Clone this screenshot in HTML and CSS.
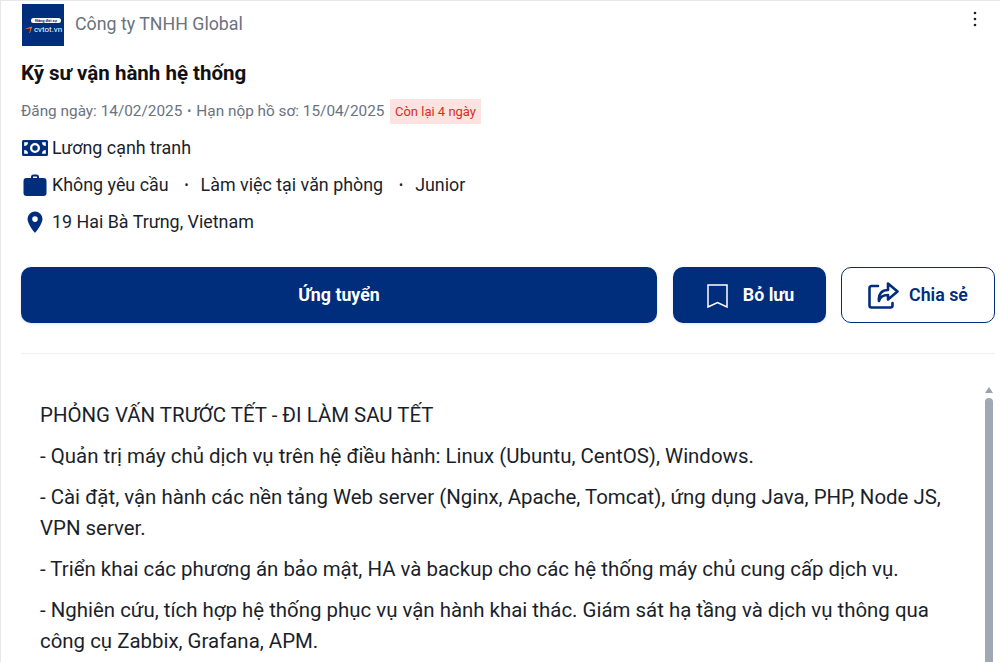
FILE: index.html
```html
<!DOCTYPE html>
<html lang="vi">
<head>
<meta charset="utf-8">
<title>Kỹ sư vận hành hệ thống</title>
<link rel="stylesheet" href="styles.css">
</head>
<body>
<main class="card">
  <header class="company">
    <div class="logo">
      <span class="logo-tag">Nâng đời sự</span>
      <span class="logo-row">
        <svg class="logo-mark" viewBox="0 0 12 10"><path d="M0 4.5 L8 1.5 L11 1 L8 9.5 L7 9.5 L8.5 3.5 Z" fill="#f26a21"/></svg>
        <span class="logo-name">cvtot.vn</span>
      </span>
    </div>
    <span class="company-name">Công ty TNHH Global</span>
    <svg class="more" viewBox="0 0 4 16"><circle cx="2" cy="2" r="1.3"/><circle cx="2" cy="8" r="1.3"/><circle cx="2" cy="14" r="1.3"/></svg>
  </header>
  <h1 class="title">Kỹ sư vận hành hệ thống</h1>
  <div class="dates">
    <span>Đăng ngày: 14/02/2025</span>
    <span class="dot">•</span>
    <span>Hạn nộp hồ sơ: 15/04/2025</span>
    <span class="badge">Còn lại 4 ngày</span>
  </div>
  <div class="info-list">
    <div class="info">
      <svg class="icon" viewBox="0 0 26 16"><path fill="#002d7c" fill-rule="evenodd" d="M1.5 0h23A1.5 1.5 0 0 1 26 1.500v13a1.500 1.500 0 0 1-1.500 1.500h-23A1.500 1.500 0 0 1 0 14.500v-13A1.500 1.500 0 0 1 1.500 0ZM6 2.200H2.200V6A3.800 3.800 0 0 0 6 2.200ZM20 2.200A3.800 3.800 0 0 0 23.800 6V2.200ZM2.200 10v3.800H6A3.800 3.800 0 0 0 2.200 10ZM23.800 10A3.800 3.800 0 0 0 20 13.800h3.800ZM13 3a5 5 0 0 0 0 10a5 5 0 0 0 0-10Z"/><circle cx="13" cy="8" r="2.700" fill="#002d7c"/></svg>
      <span>Lương cạnh tranh</span>
    </div>
    <div class="info">
      <svg class="icon" viewBox="0 0 26 24"><path fill="#002d7c" d="M9 5V4a2.500 2.500 0 0 1 2.500-2.500h3A2.500 2.500 0 0 1 17 4v1h4.500a3 3 0 0 1 3 3v12a3 3 0 0 1-3 3h-17a3 3 0 0 1-3-3V8a3 3 0 0 1 3-3Zm2 0h4V4a.5.5 0 0 0-.5-.5h-3a.5.5 0 0 0-.5.5Z"/></svg>
      <span>Không yêu cầu</span>
      <span class="sep">•</span>
      <span>Làm việc tại văn phòng</span>
      <span class="sep">•</span>
      <span>Junior</span>
    </div>
    <div class="info">
      <svg class="icon" viewBox="0 0 26 24"><path fill="#002d7c" fill-rule="evenodd" d="M13 1.500a7.500 7.500 0 0 1 7.500 7.500C20.500 14 13 23 13 23S5.500 14 5.500 9A7.500 7.500 0 0 1 13 1.500Zm0 4.800a2.800 2.800 0 1 0 0 5.600a2.800 2.800 0 0 0 0-5.600Z"/></svg>
      <span>19 Hai Bà Trưng, Vietnam</span>
    </div>
  </div>
  <div class="actions">
    <button class="btn btn-primary btn-apply">Ứng tuyển</button>
    <button class="btn btn-primary btn-save">
      <svg class="btn-icon" viewBox="0 0 21 24"><path fill="none" stroke="#fff" stroke-width="1.500" d="M1 1h19v22l-9.500-4.500L1 23Z"/></svg>
      <span>Bỏ lưu</span>
    </button>
    <button class="btn btn-outline">
      <svg class="btn-icon" viewBox="0 0 31 27"><path fill="none" stroke="#002d7c" stroke-width="2.600" stroke-linecap="round" stroke-linejoin="round" d="M10 4H3.500a2 2 0 0 0-2 2v17.500a2 2 0 0 0 2 2h19a2 2 0 0 0 2-2V21M20 1.500l9.500 8-9.500 8v-4.500c-5 0-8 2-9 6 -1-7 3-11 9-11Z"/></svg>
      <span>Chia sẻ</span>
    </button>
  </div>
  <hr class="divider">
  <section class="desc">
    <div class="desc-body">
      <p>PHỎNG VẤN TRƯỚC TẾT - ĐI LÀM SAU TẾT</p>
      <p>- Quản trị máy chủ dịch vụ trên hệ điều hành: Linux (Ubuntu, CentOS), Windows.</p>
      <p>- Cài đặt, vận hành các nền tảng Web server (Nginx, Apache, Tomcat), ứng dụng Java, PHP, Node JS, VPN server.</p>
      <p>- Triển khai các phương án bảo mật, HA và backup cho các hệ thống máy chủ cung cấp dịch vụ.</p>
      <p>- Nghiên cứu, tích hợp hệ thống phục vụ vận hành khai thác. Giám sát hạ tầng và dịch vụ thông qua công cụ Zabbix, Grafana, APM.</p>
    </div>
    <div class="scrollbar">
      <span class="arrow"></span>
      <span class="thumb"></span>
    </div>
  </section>
</main>
</body>
</html>
```
FILE: styles.css
```css
* { box-sizing: border-box; }
html, body { margin: 0; height: 662px; overflow: hidden; background: #fff; }
body { font-family: Roboto, "Liberation Sans", sans-serif; color: #1a1f2b; }
.card { height: 662px; border-top: 1px solid #e5e7eb; border-left: 1px solid #e5e7eb; padding: 3px 5px 0 20px; overflow: hidden; }
.company { display: flex; align-items: center; height: 42px; gap: 11px; }
.logo { width: 42px; height: 42px; margin-left: 1px; background: #002d7c; display: flex; flex-direction: column; align-items: center; justify-content: center; flex: none; padding-top: 2px; }
.logo-tag { font-size: 4px; line-height: 5px; background: #fff; color: #002d7c; border-radius: 3px; padding: 0 4px; font-weight: 700; white-space: nowrap; margin-left: 6px; }
.logo-row { display: flex; align-items: center; gap: 1px; margin-top: 2px; }
.logo-mark { width: 9px; height: 9px; }
.logo-name { font-size: 8px; line-height: 10px; color: #fff; font-weight: 400; }
.company-name { font-size: 17.800px; line-height: 40px; color: #6b7280; flex: 1; margin-top: -2px; }
.more { width: 4px; height: 16px; fill: #1a1f2b; margin: -13px 18px 0 0; }
.title { margin: 13px 0 0; font-size: 20.500px; line-height: 28px; font-weight: 700; color: #111; }
.dates { display: flex; align-items: center; margin: 12px 0 0; font-size: 15.350px; line-height: 25px; color: #6b7280; }
.dot { margin: 0 5px; font-size: 12px; }
.badge { margin-left: 6px; padding: 0 4.500px; background: #fde2e2; color: #d92d20; font-size: 13px; }
.info-list { display: flex; flex-direction: column; gap: 12px; margin-top: 11px; }
.info { display: flex; align-items: center; height: 25px; font-size: 17.880px; color: #1a1f2b; }
.info .icon { width: 26px; height: 24px; margin: 0 4px 0 1px; flex: none; }
.sep { margin: 0 12px 0 16px; font-size: 12px; }
.actions { display: flex; gap: 16px; margin-top: 33px; }
.btn { height: 56px; border-radius: 10px; font-family: inherit; font-size: 17.800px; line-height: 24px; font-weight: 700; display: flex; align-items: center; justify-content: center; gap: 15px; cursor: pointer; padding-bottom: 2px; }
.btn-primary { background: #002d7c; color: #fff; border: 0; box-shadow: 0 1px 3px rgba(0,45,124,.12); }
.btn-apply { width: 636px; }
.btn-save { width: 153px; padding-left: 8px; }
.btn-outline { width: 154px; margin-left: -1px; background: #fff; color: #002d7c; border: 1px solid #002d7c; gap: 10px; font-weight: 600; }
.btn-icon { width: 21px; height: 24px; flex: none; margin-bottom: -2px; }
.btn-outline .btn-icon { width: 31px; height: 27px; }
.divider { border: 0; height: 1px; background: #f0f1f3; margin: 30px 0 0; }
.desc { display: flex; margin-top: 46px; padding: 0 0 0 19px; }
.desc-body { flex: 1; font-size: 20.430px; line-height: 31px; color: #1a1f2b; }
.desc-body p { margin: 0 0 10px; }
.scrollbar { width: 10px; margin: -13px 1px 0 28px; display: flex; flex-direction: column; align-items: center; }
.arrow { width: 0; height: 0; border-left: 4px solid transparent; border-right: 4px solid transparent; border-bottom: 6px solid #9ca3af; margin-bottom: 5px; }
.thumb { width: 8px; height: 400px; background: #a0a8b5; border-radius: 4px 4px 0 0; }
```
